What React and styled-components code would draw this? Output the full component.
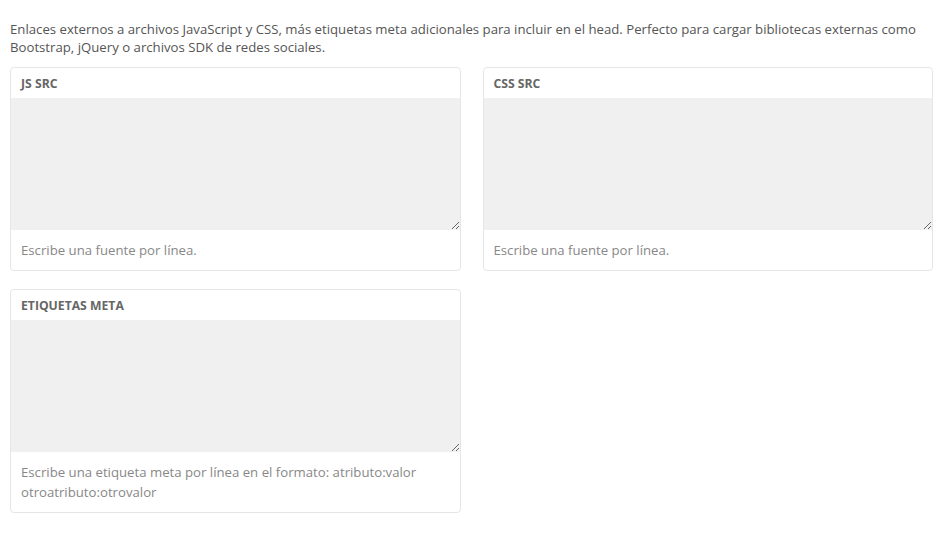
import React from "react";
import styled, { createGlobalStyle } from "styled-components";

const GlobalStyle = createGlobalStyle`
  body {
    margin: 0;
    background: #fff;
    font-family: "Open Sans", "Liberation Sans", sans-serif;
  }
`;

const fields = [
  { title: "JS SRC", help: ["Escribe una fuente por línea."] },
  { title: "CSS SRC", help: ["Escribe una fuente por línea."] },
  {
    title: "ETIQUETAS META",
    help: [
      "Escribe una etiqueta meta por línea en el formato: atributo:valor",
      "otroatributo:otrovalor",
    ],
  },
];

function App() {
  return (
    <Page>
      <GlobalStyle />
      <Intro>
        Enlaces externos a archivos JavaScript y CSS, más etiquetas meta
        adicionales para incluir en el head. Perfecto para cargar bibliotecas
        externas como Bootstrap, jQuery o archivos SDK de redes sociales.
      </Intro>
      <Grid>
        {fields.map((f) => (
          <Card key={f.title}>
            <CardHeader>{f.title}</CardHeader>
            <Area />
            <Help>
              {f.help.map((line) => (
                <div key={line}>{line}</div>
              ))}
            </Help>
          </Card>
        ))}
      </Grid>
    </Page>
  );
}

export default App;

const Page = styled.div`
  padding: 20px 6px 20px 10px;
`;

const Intro = styled.p`
  margin: 0 0 11px;
  font-size: 13.2px;
  line-height: 18px;
  color: #555;
`;

const Grid = styled.div`
  display: grid;
  grid-template-columns: 1fr 1fr;
  column-gap: 22px;
  row-gap: 18px;
  align-items: start;
`;

const Card = styled.div`
  border: 1px solid #e6e6e6;
  border-radius: 4px;
  background: #fff;
  overflow: hidden;
`;

const CardHeader = styled.div`
  height: 30px;
  padding: 0 10px;
  display: flex;
  align-items: center;
  font-size: 12.2px;
  font-weight: 700;
  color: #666;
`;

const Area = styled.textarea`
  display: block;
  width: 100%;
  height: 132px;
  box-sizing: border-box;
  margin: 0;
  border: none;
  outline: none;
  background: #f0f0f0;
  resize: vertical;
  font-family: inherit;
`;

const Help = styled.div`
  padding: 10px;
  font-size: 13.2px;
  line-height: 20px;
  color: #888;
`;
